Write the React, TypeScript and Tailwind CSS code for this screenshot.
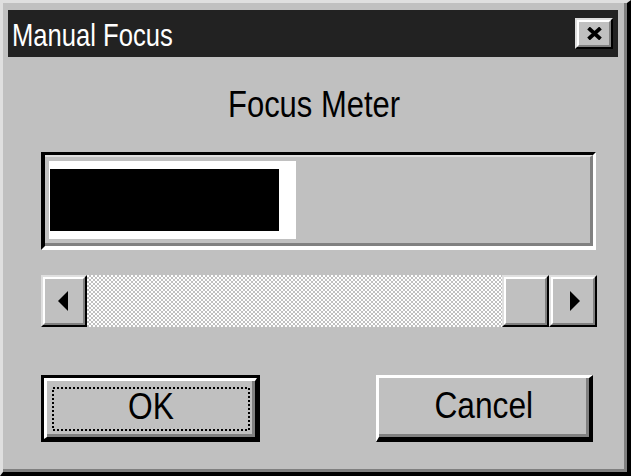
import type { ReactNode } from "react";

function Raised({ children, className = "" }: { children?: ReactNode; className?: string }) {
	return (
		<div
			className={`border-t-2 border-l-2 border-r-2 border-b-2 border-t-[#dfdfdf] border-l-[#dfdfdf] border-r-black border-b-black ${className}`}
		>
			<div className="flex h-full w-full items-center justify-center border-t-2 border-l-2 border-r-2 border-b-2 border-t-white border-l-white border-r-[#808080] border-b-[#808080] bg-[#c0c0c0]">
				{children}
			</div>
		</div>
	);
}

export default function App() {
	return (
		<div className="h-[476px] w-[631px] font-['Liberation_Sans',Arial,sans-serif] select-none">
			<div className="flex h-full w-full flex-col border-t-[3px] border-l-[3px] border-r-[4px] border-b-[4px] border-t-[#dfdfdf] border-l-[#dfdfdf] border-r-black border-b-black">
				<div className="flex h-full flex-col border-r-[3px] border-b-[3px] border-[#808080] bg-[#c0c0c0] pt-[7px] pr-[6px] pl-[5px]">
					{/* title bar */}
					<div className="flex h-[47px] items-center justify-between bg-[#222222] pr-[5px] pl-[4px]">
						<span className="inline-block origin-left scale-x-[0.8] pt-[2px] text-[32px] leading-none text-white">
							Manual Focus
						</span>
						<Raised className="h-[31px] w-[38px]">
							<svg width="15" height="13" viewBox="0 0 15 13">
								<path d="M1.5 1 L13.5 12 M13.5 1 L1.5 12" stroke="black" strokeWidth="3.8" />
							</svg>
						</Raised>
					</div>

					<div className="flex flex-col pr-[22px] pl-[33px]">
						<div className="mt-[30px] h-[36px] pr-[8px] text-center text-[36px] leading-[36px] text-black">
							<span className="inline-block scale-x-[0.86]">Focus Meter</span>
						</div>

						{/* meter */}
						<div className="mt-[29px] h-[98px] border-t-[3px] border-l-[4px] border-r-[3px] border-b-[4px] border-t-black border-l-black border-r-white border-b-white">
							<div className="h-full border-t-[2px] border-r-[3px] border-b-[3px] border-t-[#dfdfdf] border-r-[#808080] border-b-[#808080] p-[4px]">
								<div className="h-full w-[247px] bg-white py-[8px] pr-[17px] pl-[1px]">
									<div className="h-full w-full bg-black" />
								</div>
							</div>
						</div>

						{/* scrollbar */}
						<div className="mt-[25px] flex h-[52px] w-[556px]">
							<Raised className="h-full w-[46px] shrink-0">
								<svg width="11" height="20" viewBox="0 0 11 20" className="mr-[2px]">
									<path d="M10 0 L0 10 L10 20 Z" fill="black" />
								</svg>
							</Raised>
							<div className="h-full flex-1 bg-[repeating-conic-gradient(#c0c0c0_0_25%,#ffffff_0_50%)] bg-[length:4px_4px]" />
							<Raised className="h-full w-[47px] shrink-0" />
							<Raised className="h-full w-[48px] shrink-0">
								<svg width="11" height="20" viewBox="0 0 11 20" className="ml-[2px]">
									<path d="M1 0 L11 10 L1 20 Z" fill="black" />
								</svg>
							</Raised>
						</div>

						{/* buttons */}
						<div className="mt-[48px] flex h-[67px] w-[552px] justify-between">
							<div className="h-full w-[219px] border-[3px] border-black">
								<div className="h-full border-t-[3px] border-l-[3px] border-r-[2px] border-b-[2px] border-t-white border-l-white border-r-black border-b-black">
									<div className="h-full border-r-[3px] border-b-[3px] border-[#808080] pt-[6px] pr-[2px] pb-[3px] pl-[5px]">
										<div className="relative flex h-full items-center justify-center text-[36px] leading-none">
											<svg className="absolute inset-0" width="198" height="44" viewBox="0 0 198 44" shapeRendering="crispEdges">
												<rect x="1" y="1" width="196" height="42" fill="none" stroke="black" strokeWidth="2" strokeDasharray="2 2" />
											</svg>
											<span className="inline-block scale-x-[0.88] pb-[4px]">OK</span>
										</div>
									</div>
								</div>
							</div>
							<div className="h-full w-[217px] border-t-[3px] border-l-[3px] border-r-[4px] border-b-[5px] border-t-white border-l-white border-r-black border-b-black">
								<div className="flex h-full items-center justify-center border-r-[3px] border-b-[3px] border-[#808080] text-[36px] leading-none">
									<span className="inline-block scale-x-[0.88] pl-[4px]">Cancel</span>
								</div>
							</div>
						</div>
					</div>
				</div>
			</div>
		</div>
	);
}
